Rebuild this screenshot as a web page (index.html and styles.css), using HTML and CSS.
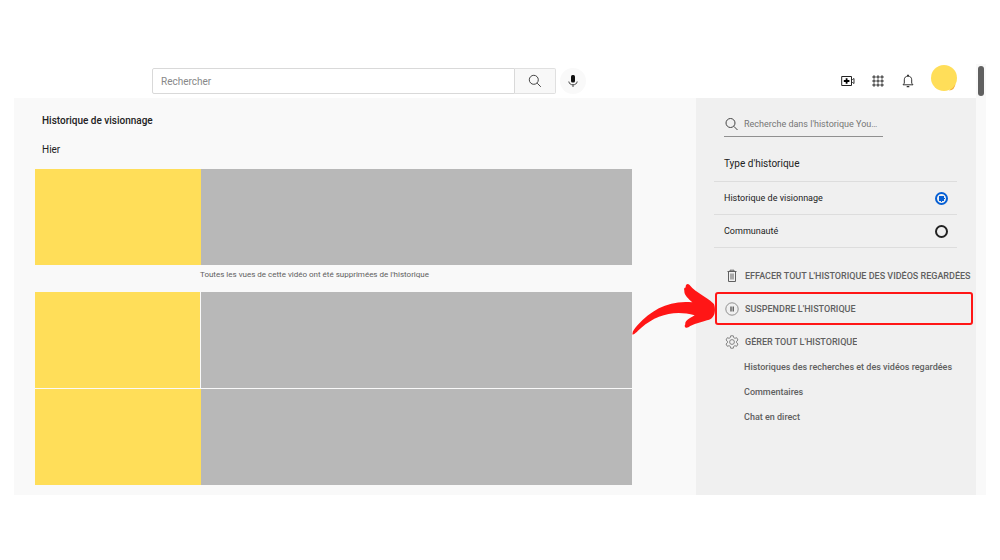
FILE: index.html
```html
<!DOCTYPE html>
<html lang="fr">
<head>
  <meta charset="UTF-8">
  <meta name="viewport" content="width=device-width, initial-scale=1.0">
  <title>Historique de visionnage</title>
  <link rel="stylesheet" href="styles.css">
</head>
<body>
  <div class="app">
    <div class="page">
      <header class="topbar">
        <form class="search">
          <input type="text" class="search-input" placeholder="Rechercher" aria-label="Rechercher">
          <button type="submit" class="search-btn" aria-label="Lancer la recherche">
            <svg width="14" height="14" viewBox="0 0 14 14" fill="none" stroke="#444"><circle cx="5.8" cy="5.8" r="4.5"/><path d="M9.2 9.2l3.6 3.6"/></svg>
          </button>
        </form>
        <button type="button" class="mic-btn" aria-label="Recherche vocale">
          <svg width="12" height="14" viewBox="0 0 12 14"><rect x="4" y="1" width="4" height="7.5" rx="1.5" fill="#111"/><path d="M1.8 7.500c.4 2.200 1.900 3.300 4.200 3.300s3.800-1.100 4.200-3.300M6 10.700v2.300" fill="none" stroke="#444"/></svg>
        </button>

        <div class="topbar-icons">
          <button type="button" class="icon-btn" aria-label="Créer">
            <svg width="14" height="12" viewBox="0 0 14 12" fill="none" stroke="#222"><path d="M.7 1.500h9.800v9H.7z"/><path d="M10.500 4.500h1l1.500-1v5l-1.500-1h-1" stroke-width=".9"/><path d="M5.600 3.200v5.600M2.800 6h5.600" stroke="#000" stroke-width="1.800"/></svg>
          </button>
          <button type="button" class="icon-btn" aria-label="Applications">
            <svg width="12" height="12" viewBox="0 0 12 12" fill="#aaa" stroke="#333" stroke-width=".8"><path d="M1 1h2v2H1zM5 1h2v2H5zM9 1h2v2H9zM1 5h2v2H1zM5 5h2v2H5zM9 5h2v2H9zM1 9h2v2H1zM5 9h2v2H5zM9 9h2v2H9z"/></svg>
          </button>
          <button type="button" class="icon-btn" aria-label="Notifications">
            <svg width="12" height="14" viewBox="0 0 12 14" fill="none" stroke="#333"><path d="M1 10.800h10L9.700 9.200V5.800C9.700 3.500 8.300 2.200 6 2.200S2.300 3.500 2.300 5.800v3.400z"/><path d="M5 1.400h2M4.700 12.600h2.600" stroke-width="1.200"/></svg>
          </button>
          <button type="button" class="avatar" aria-label="Compte">
            <svg width="26" height="26" viewBox="0 0 26 26"><path d="M18 25.500q6-.5 6.500-7z" fill="#f7b13c"/><circle cx="13" cy="13" r="13" fill="#ffde59"/></svg>
          </button>
        </div>
      </header>

      <div class="content">
        <main class="feed">
          <h1>Historique de visionnage</h1>
          <h2>Hier</h2>
          <div class="video">
            <div class="thumb"></div>
            <div class="details"></div>
          </div>
          <p class="notice">Toutes les vues de cette vidéo ont été supprimées de l'historique</p>
          <div class="video separated">
            <div class="thumb"></div>
            <div class="details"></div>
          </div>
          <div class="video">
            <div class="thumb"></div>
            <div class="details"></div>
          </div>
        </main>

        <aside class="sidebar">
          <label class="history-search">
            <svg width="14" height="14" viewBox="0 0 14 14" fill="none" stroke="#444"><circle cx="6.500" cy="6" r="4.500"/><path d="M9.800 9.300l3.700 3.700"/></svg>
            <input type="text" placeholder="Recherche dans l'historique YouTube" aria-label="Recherche dans l'historique YouTube">
          </label>

          <fieldset class="types">
            <legend>Type d'historique</legend>
            <label class="type">Historique de visionnage
              <input type="radio" name="type" checked>
            </label>
            <label class="type">Communauté
              <input type="radio" name="type">
            </label>
          </fieldset>

          <div class="actions">
            <button type="button" class="action">
              <svg width="14" height="14" viewBox="0 0 14 14" fill="none" stroke="#606060"><path d="M3.500 2.500v10h7v-10M2.500 2.500h9M5 2.500v-1.300h4v1.300"/><path d="M6 4.500v6M8 4.500v6"/></svg>
              <span>Effacer tout l'historique des vidéos regardées</span>
            </button>
            <button type="button" class="action highlighted">
              <svg width="14" height="14" viewBox="0 0 14 14" fill="none" stroke="#777"><circle cx="7" cy="7" r="6.200" stroke-width=".8"/><path d="M6 4.500v5M8.200 4.500v5" stroke="#444" stroke-width="1.200"/></svg>
              <span>Suspendre l'historique</span>
              <svg class="arrow" width="85" height="53" viewBox="0 0 255 159"><path fill="#ff1616" d="M2 155C-1 147 8 136 17 126C60 80 110 51 181 58C169 46 156 36 157 23C155 17 158 13 161 14C160 5 166 0 172 5C196 33 218 36 245 62C250 69 250 87 246 96C242 105 234 111 225 112C207 118 184 123 169 133C161 137 155 131 160 124C158 115 170 107 188 97C128 80 74 95 28 134C19 141 10 153 2 155z"/></svg>
            </button>
            <button type="button" class="action">
              <svg width="14" height="14" viewBox="0 0 14 14" fill="none" stroke="#777" stroke-width=".9"><circle cx="7" cy="7" r="2.400"/><path d="M5.700.8h2.600l.4 1.800 1.200.7 1.800-.6 1.300 2.300L11.600 6.200v1.600L13 9l-1.300 2.300-1.800-.6-1.200.7-.4 1.800H5.700l-.4-1.800-1.200-.7-1.800.6L1 9l1.400-1.200V6.200L1 5l1.300-2.300 1.800.6 1.200-.7z"/></svg>
              <span>Gérer tout l'historique</span>
            </button>
          </div>

          <nav class="links">
            <a href="#">Historiques des recherches et des vidéos regardées</a>
            <a href="#">Commentaires</a>
            <a href="#">Chat en direct</a>
          </nav>
        </aside>
      </div>
    </div>
    <div class="scrollbar"><div class="scroll-thumb"></div></div>
  </div>
</body>
</html>
```
FILE: styles.css
```css
/* General Styles */
* {
  box-sizing: border-box;
}

body {
  margin: 0;
  padding: 64px 14px;
  background: #fff;
  color: #222;
  font-family: Roboto, Arial, sans-serif;
  font-size: 9px;
}

button, input {
  font-family: inherit;
}

button {
  padding: 0;
  border: none;
  background: none;
  cursor: pointer;
}

svg {
  display: block;
  flex-shrink: 0;
}

.app {
  display: flex;
}

.page {
  flex: 1;
  min-width: 0;
}

/* Top bar */
.topbar {
  display: flex;
  align-items: center;
  height: 34px;
  padding: 0 19px 0 138px;
}

.search {
  display: flex;
  flex: 1;
  max-width: 404px;
  height: 26px;
}

.search-input {
  flex: 1;
  min-width: 0;
  padding: 0 8px;
  border: 1px solid #d9d9d9;
  border-radius: 2px 0 0 2px;
  font-size: 10px;
}

.search-input::placeholder {
  color: #888;
}

.search-btn {
  display: flex;
  align-items: center;
  justify-content: center;
  width: 41px;
  border: 1px solid #e0e0e0;
  border-left: none;
  border-radius: 0 2px 2px 0;
  background: #f8f8f8;
}

.mic-btn {
  display: flex;
  align-items: center;
  justify-content: center;
  width: 26px;
  height: 26px;
  margin-left: 4px;
  border-radius: 50%;
  background: #f9f9f9;
}

.topbar-icons {
  display: flex;
  align-items: center;
  gap: 16px;
  margin-left: auto;
}

.icon-btn {
  display: flex;
  justify-content: center;
  width: 14px;
}

.avatar {
  align-self: flex-start;
  margin-bottom: 6px;
}

/* Watch history */
.content {
  display: flex;
  background: #f9f9f9;
}

.feed {
  flex: 1;
  padding: 16px 64px 9px 21px;
}

h1, h2 {
  margin: 0 0 15px 7px;
  font-size: 10px;
  font-weight: 500;
  line-height: 14px;
}

h2 {
  margin-bottom: 12px;
  font-weight: 400;
}

.video {
  display: flex;
  height: 96px;
  margin-bottom: 1px;
}

.thumb {
  width: 166px;
  background: #ffde59;
}

.separated .thumb {
  border-right: 1px solid #f9f9f9;
}

.details {
  flex: 1;
  background: #b8b8b8;
}

.notice {
  margin: 0 0 8px 165px;
  color: #606060;
  font-size: 8px;
  line-height: 18px;
}

/* Sidebar */
.sidebar {
  width: 280px;
  padding: 14px 0 64px 18px;
  background: #f0f0f0;
}

.history-search {
  display: flex;
  align-items: center;
  gap: 6px;
  width: 159px;
  height: 25px;
  margin-left: 10px;
  padding-right: 3px;
  border-bottom: 1px solid #909090;
}

.history-search input {
  flex: 1;
  min-width: 0;
  padding: 0;
  border: none;
  background: none;
  font-size: 9px;
  text-overflow: ellipsis;
}

.history-search input::placeholder {
  color: #757575;
}

.types {
  margin: 0 19px 0 0;
  padding: 0;
  border: none;
}

.types legend {
  width: 100%;
  padding: 19px 10px 9px;
  border-bottom: 1px solid #ddd;
  font-size: 10px;
  line-height: 16px;
}

.type {
  display: flex;
  align-items: center;
  justify-content: space-between;
  height: 33px;
  padding: 0 9px 0 10px;
  border-bottom: 1px solid #ddd;
}

.type input {
  appearance: none;
  width: 13px;
  height: 13px;
  margin: 0;
  border: 2px solid #222;
  border-radius: 50%;
}

.type input:checked {
  border-color: #065fd4;
  background: radial-gradient(#065fd4 3px, #f0f0f0 3px);
}

.actions {
  padding-top: 11px;
}

.action {
  display: flex;
  align-items: center;
  gap: 6px;
  width: 100%;
  height: 33px;
  padding-left: 11px;
  color: #606060;
  font-size: 9px;
  font-weight: 500;
  text-transform: uppercase;
  white-space: nowrap;
}

.action span {
  overflow: hidden;
}

.highlighted {
  position: relative;
  width: 258px;
  margin-left: 1px;
  padding-left: 8px;
  border: 2px solid #ff1616;
  border-radius: 3px;
}

.arrow {
  position: absolute;
  top: -11px;
  left: -85px;
}

.links {
  display: flex;
  flex-direction: column;
  margin-top: -3px;
  padding-left: 30px;
}

.links a {
  color: #606060;
  font-weight: 500;
  line-height: 25px;
  text-decoration: none;
}

/* Scrollbar */
.scrollbar {
  width: 10px;
  padding: 2px;
  background: #f9f9f9;
}

.scroll-thumb {
  width: 6px;
  height: 30px;
  border-radius: 3px;
  background: #606060;
}
```
